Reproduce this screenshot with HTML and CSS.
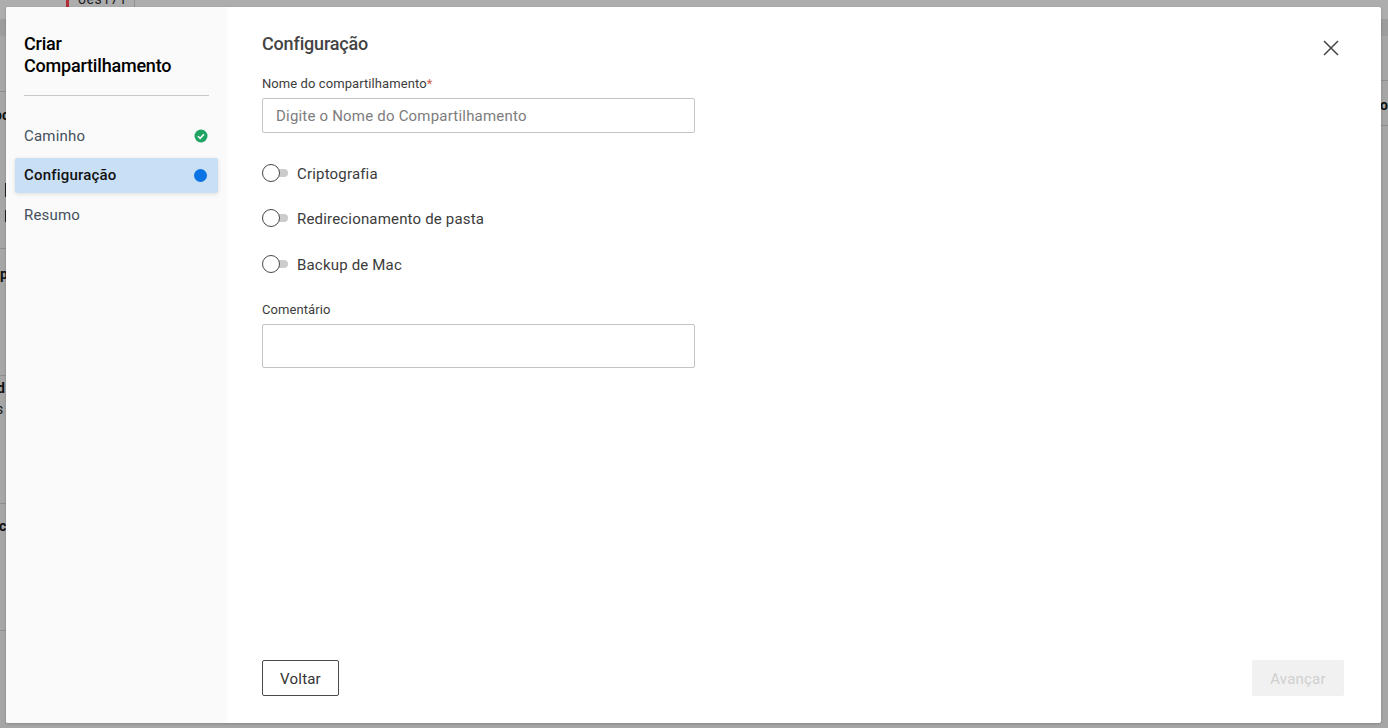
FILE: index.html
```
<!DOCTYPE html>
<html lang="pt">
<head>
<meta charset="utf-8">
<title>Criar Compartilhamento</title>
<link rel="stylesheet" href="styles.css">
</head>
<body>
<div class="page">
  <div class="row-top"><span class="red-mark"></span><span class="top-text">oes171</span><span class="top-rule"></span></div>
  <div class="row-band"></div>
  <div class="tables">
    <div class="col-left">
      <div class="row row-head"><b class="cell cell-oc">oc</b><span class="tick tick-1"></span><span class="tick tick-2"></span></div>
      <div class="row row-a"><b class="cell cell-p">p</b></div>
      <div class="row row-b"><b class="cell cell-d">d</b><span class="cell cell-s">s</span></div>
      <div class="row row-c"><b class="cell cell-c">c</b></div>
      <div class="row row-d"></div>
    </div>
    <div class="col-right">
      <div class="r-row r-head"></div>
      <div class="r-row r-body"><b class="cell">o</b></div>
    </div>
  </div>
</div>
<div class="modal">
  <aside class="side">
    <h1 class="side-title">Criar Compartilhamento</h1>
    <hr class="side-rule">
    <ul class="steps">
      <li class="step">Caminho
        <svg class="step-icon" viewBox="0 0 14 14" width="14" height="14"><circle cx="7" cy="7" r="6.5" fill="#1fa463"/><path d="M4 7.2l2.1 2.1L10 5.2" fill="none" stroke="#fff" stroke-width="1.6"/></svg>
      </li>
      <li class="step step-active">Configuração<span class="step-dot"></span></li>
      <li class="step">Resumo</li>
    </ul>
  </aside>
  <main class="main">
    <svg class="close" viewBox="0 0 16 16" width="16" height="16"><path d="M1 1l14 14M15 1L1 15" fill="none" stroke="#444" stroke-width="1.5"/></svg>
    <h2 class="main-title">Configuração</h2>
    <label class="field-label">Nome do compartilhamento<span class="req">*</span></label>
    <input class="input" type="text" placeholder="Digite o Nome do Compartilhamento">
    <div class="switches">
      <div class="switch"><span class="track"><span class="knob"></span></span>Criptografia</div>
      <div class="switch"><span class="track"><span class="knob"></span></span>Redirecionamento de pasta</div>
      <div class="switch"><span class="track"><span class="knob"></span></span>Backup de Mac</div>
    </div>
    <label class="field-label">Comentário</label>
    <textarea class="textarea"></textarea>
    <div class="actions">
      <button class="btn btn-back">Voltar</button>
      <button class="btn btn-next" disabled>Avançar</button>
    </div>
  </main>
</div>
</body>
</html>
```
FILE: styles.css
```
* { box-sizing: border-box; }
html, body { margin: 0; height: 100%; }
body { background: #a6a6a6; font-family: Roboto, "Liberation Sans", sans-serif; overflow: hidden; }

.page { height: 728px; overflow: hidden; color: #111; font-size: 14px; line-height: 20px; }
.row-top { height: 19px; display: flex; background: #adadad; padding-left: 66px; }
.red-mark { width: 3px; height: 8px; background: #b32d38; }
.top-text { margin: -11px 0 0 9px; color: #222; letter-spacing: 0.5px; width: 56px; }
.top-rule { width: 1px; height: 19px; background: #8f8f8f; }
.row-band { height: 17px; background: #9d9d9d; }

.tables { display: flex; }
.col-left { flex: 1; min-width: 0; }
.col-right { width: 7px; flex: none; overflow: hidden; }
.row { border-bottom: 1px solid #8f8f8f; }
.cell { display: block; font-weight: 700; }
.row-head { height: 213px; padding-top: 69px; background: linear-gradient(#8f8f8f, #8f8f8f) 0 55px / 100% 1px no-repeat; }
.cell-oc { margin-left: -6px; }
.tick { display: block; width: 1px; background: #222; margin-left: 5px; }
.tick-1 { height: 14px; margin-top: 58px; }
.tick-2 { height: 12px; margin-top: 13px; }
.row-a { height: 127px; padding-top: 15px; }
.cell-p { margin-left: 0; }
.row-b { height: 128px; padding-top: 2px; }
.cell-d { margin-left: -3px; }
.cell-s { margin: 1px 0 0 -4px; font-weight: 400; }
.row-c { height: 127px; padding-top: 12px; }
.cell-c { margin-left: -1px; }
.row-d { height: 97px; border: 0; }
.r-row { border-bottom: 1px solid #8f8f8f; }
.r-head { height: 45px; }
.r-body { height: 45px; padding-top: 14px; margin-left: -1px; }

.modal { position: absolute; left: 6px; top: 7px; width: 1375px; height: 716px; display: flex; background: #fff; border-radius: 2px; box-shadow: 0 1px 3px rgba(0,0,0,.2); }

.side { width: 221px; flex: none; background: #fafafa; padding: 26px 9px 0 9px; border-radius: 2px 0 0 2px; }
.side-title { margin: 0 9px; font-size: 18px; line-height: 22px; font-weight: 500; letter-spacing: -0.2px; color: #000; }
.side-rule { margin: 18px 9px 22.5px; border: 0; border-top: 1px solid #c8c8c8; }
.steps { list-style: none; margin: 0; padding: 0; display: flex; flex-direction: column; gap: 4.5px; }
.step { display: flex; justify-content: space-between; align-items: center; height: 35px; padding: 0 11px 0 9px; font-size: 15px; letter-spacing: 0.2px; color: #44505c; }
.step-active { background: #c9dff6; color: #111; font-weight: 500; border-radius: 2px; box-shadow: 0 1px 4px rgba(0,0,0,.12); padding-bottom: 1px; }
.step-dot { width: 13px; height: 13px; border-radius: 50%; background: #0b74e5; }
.step-icon { margin-right: -1px; }

.main { position: relative; flex: 1; display: flex; flex-direction: column; padding: 26px 37px 27px 35px; }
.close { position: absolute; left: 1096px; top: 33px; }
.main-title { margin: 0 0 21px; font-size: 18px; line-height: 22px; font-weight: 500; letter-spacing: -0.17px; color: #444; }
.field-label { display: block; font-size: 13px; line-height: 15px; letter-spacing: 0.08px; color: #3d3d3d; margin-bottom: 7px; }
.req { color: #d0604a; }
.input { display: block; width: 433px; height: 35px; padding: 0 13px; border: 1px solid #c4c4c4; border-radius: 2px; font: 15px Roboto, sans-serif; letter-spacing: 0.2px; color: #333; outline: 0; }
.input::placeholder { color: #7d7d7d; opacity: 1; }
.switches { display: flex; flex-direction: column; gap: 24.5px; margin: 29px 0 28px; }
.switch { display: flex; align-items: center; height: 21px; padding-top: 2px; font-size: 15px; letter-spacing: 0.18px; color: #3b3b3b; }
.track { position: relative; width: 26px; height: 8px; margin: 0 9px 2px 0; background: #ccc; border-radius: 4px; }
.knob { position: absolute; left: 0; top: -5px; width: 18px; height: 18px; background: #fff; border: 1px solid #4a4a4a; border-radius: 50%; }
.textarea { display: block; width: 433px; height: 44px; border: 1px solid #c4c4c4; border-radius: 2px; resize: none; outline: 0; }
.actions { margin-top: auto; display: flex; justify-content: space-between; }
.btn { height: 36px; padding: 1px 0 0; font: 15px Roboto, sans-serif; letter-spacing: 0.2px; border-radius: 2px; }
.btn-back { width: 77px; background: #fff; border: 1px solid #4a4a4a; color: #333; }
.btn-next { width: 92px; background: #f1f1f1; border: 0; color: #cfcfcf; }
```
